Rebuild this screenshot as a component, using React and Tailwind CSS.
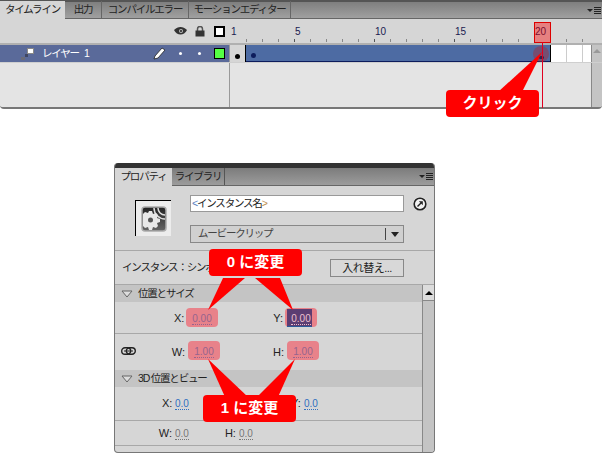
import React from "react";

const jp = "font-['Liberation_Sans','Noto_Sans_CJK_JP',sans-serif]";
const tight = "text-[10.5px] tracking-[-1.2px] whitespace-nowrap";

const Gear = () => (
  <svg width="26" height="26" viewBox="0 0 26 26">
    <defs>
      <linearGradient id="g" x1="0" y1="0" x2="0" y2="1">
        <stop offset="0" stopColor="#222" />
        <stop offset="1" stopColor="#666" />
      </linearGradient>
    </defs>
    <rect x="1" y="1" width="24" height="24" rx="3" fill="url(#g)" stroke="#aaa" strokeWidth="1.500" />
    <path d="M13 2a11 11 0 0 0 11 11M17 2a7 7 0 0 0 7 7" stroke="#ddd" strokeWidth="1.500" fill="none" />
    <path d="M8 5h3l1 3 3-1 2 2-1 3 3 1v3l-3 1 1 3-2 2-3-1-1 3H8l-1-3-3 1-2-2V8l2-2 3 1z" fill="#e8e8e8" />
    <circle cx="9.500" cy="14" r="2.500" fill="#555" />
  </svg>
);

const Eye = () => (
  <svg width="13" height="9" viewBox="0 0 13 9">
    <path d="M0 3c4-4 9-4 13 0-3 6-10 6-13 0z" fill="#333" />
    <circle cx="7" cy="4" r="2" fill="#bbb" />
    <circle cx="7" cy="4" r="1" fill="#222" />
  </svg>
);

const Lock = () => (
  <svg width="10" height="11" viewBox="0 0 10 11">
    <path d="M2.500 5V3a2.500 2.500 0 0 1 5 0v2" stroke="#555" strokeWidth="1.500" fill="none" />
    <rect x="0.500" y="4.500" width="9" height="6" fill="#333" />
  </svg>
);

const Pencil = () => (
  <svg width="13" height="13" viewBox="0 0 13 13">
    <path d="M1 12l1-3 7-8 3 2-7 8z" fill="#fff" stroke="#222" strokeWidth="0.800" />
  </svg>
);

const Link = () => (
  <svg width="15" height="8" viewBox="0 0 15 8">
    <rect x="0.700" y="0.700" width="9" height="6.600" rx="3.300" fill="none" stroke="#222" strokeWidth="1.400" />
    <rect x="5.300" y="0.700" width="9" height="6.600" rx="3.300" fill="none" stroke="#222" strokeWidth="1.400" />
    <path d="M3 4h9" stroke="#222" />
  </svg>
);

const Jump = () => (
  <svg width="14" height="14" viewBox="0 0 14 14">
    <circle cx="7" cy="7" r="5.800" fill="#f2f2f2" stroke="#222" strokeWidth="1.600" />
    <path d="M4.500 9.500L8 6" stroke="#222" strokeWidth="1.500" />
    <path d="M5.800 4.300h4v4z" fill="#222" />
  </svg>
);

const LayerIcon = () => (
  <svg width="14" height="14" viewBox="0 0 14 14">
    <rect x="0" y="10" width="4" height="3" fill="#6b6b78" />
    <rect x="4" y="7" width="3" height="3" fill="#3f4663" />
    <rect x="6.500" y="1.500" width="6" height="5" fill="#fff" stroke="#888" />
  </svg>
);

const Tri = () => (
  <svg width="12" height="8" viewBox="0 0 12 8">
    <path d="M1 1h10L6 7z" fill="#ddd" stroke="#666" />
  </svg>
);

const Menu = () => (
  <div className="flex items-center gap-[1px]">
    <div className="w-0 h-0 border-x-[3px] border-t-[3px] border-x-transparent border-t-[#222]" />
    <div className="flex flex-col gap-[1px]">
      <div className="w-[7px] h-[1px] bg-[#222]" />
      <div className="w-[7px] h-[1px] bg-[#222]" />
      <div className="w-[7px] h-[1px] bg-[#222]" />
      <div className="w-[7px] h-[1px] bg-[#222]" />
    </div>
  </div>
);

const Val = ({ children, color = "text-[#2f6fc0]", border = "border-[#2f6fc0]" }) => (
  <span className={`text-[10px] leading-[11px] border-b border-dotted ${color} ${border}`}>{children}</span>
);

const Pink = ({ children, dark }) => (
  <div className="relative w-[32px] h-[19px] rounded-[4px] bg-[#e8828a] flex items-center justify-center">
    {dark && <div className="absolute left-[2px] top-[1px] w-[25px] h-[18px] bg-[#5c3d72] border-b border-[#2a5a9a]" />}
    <span className={`relative mt-[2px] text-[10px] leading-[11px] border-b border-dotted ${dark ? "text-[#eec0d0] border-[#eec0d0]" : "text-[#96648e] border-[#96648e]"}`}>{children}</span>
  </div>
);

const Callout = ({ className, text, size = "text-[15px]" }) => (
  <div className={`absolute h-[27px] w-[93px] rounded-[4px] bg-[#ff0000] flex items-center justify-center font-bold text-white ${size} ${className}`}>
    {text}
  </div>
);

const frames = Array.from({ length: 23 }, (_, i) => i);

const Timeline = () => (
  <div className="relative h-[109px] w-[602px] bg-[#e4e4e4] border-b-2 border-[#777] rounded-b-[4px] flex flex-col text-[#222] overflow-hidden">
    {/* Tabs */}
    <div className={`h-[19px] flex items-end bg-gradient-to-b from-[#7f7f7f] to-[#a0a0a0] border-b border-[#666] border-t-2 border-t-[#555] ${tight}`}>
      <div className="h-[18px] w-[65px] bg-[#d6d6d6] leading-[17px] text-center -mb-px">タイムライン</div>
      <div className="h-[17px] w-[37px] border-r border-[#666] leading-[16px] text-center">出力</div>
      <div className="h-[17px] w-[87px] border-r border-[#666] leading-[16px] text-center">コンパイルエラー</div>
      <div className="h-[17px] w-[102px] border-r border-[#666] leading-[16px] text-center">モーションエディター</div>
      <div className="ml-auto mr-[1px] mb-[4px]"><Menu /></div>
    </div>
    {/* Ruler */}
    <div className="h-[26px] flex bg-[#d6d6d6] border-b-2 border-[#b0b0b0]">
      <div className="w-[230px] flex justify-end items-center pr-[5px]">
        <Eye />
        <div className="ml-[8px]"><Lock /></div>
        <div className="ml-[9px] w-[11px] h-[11px] border-2 border-black bg-white" />
      </div>
      <div className="flex-1 flex">
        {frames.map((i) => (
          <div key={i} className="relative w-[16px] shrink-0 h-full">
            <span className="absolute left-[1px] top-[7px] text-[10px] leading-[12px] text-[#1a1a50] whitespace-nowrap">
              {i === 0 ? "1" : (i + 1) % 5 === 0 ? i + 1 : ""}
            </span>
            {i > 0 && <div className={`absolute left-0 bottom-[1px] w-[1px] h-[3px] ${(i + 1) % 5 === 0 ? "bg-[#555]" : "bg-[#888]"}`} />}
          </div>
        ))}
      </div>
    </div>
    {/* Layer row */}
    <div className="h-[18px] flex border-b border-[#cfcfcf]">
      <div className="w-[229px] bg-[#5a6a9a] flex items-center text-white">
        <div className="ml-[21px]"><LayerIcon /></div>
        <span className={`ml-[7px] leading-[14px] mb-[2px] ${tight}`}>
          レイヤー<span className="ml-[5px]">1</span>
        </span>
        <div className="ml-auto flex items-center">
          <Pencil />
          <div className="ml-[13px] w-[3px] h-[3px] rounded-full bg-white" />
          <div className="ml-[16px] w-[3px] h-[3px] rounded-full bg-white" />
          <div className="ml-[13px] mr-[4px] w-[11px] h-[11px] bg-[#55ff44] border border-black" />
        </div>
      </div>
      <div className="w-[1px] bg-[#999]" />
      <div className="w-[16px] bg-[#d6d6d6] border-r border-black flex items-end justify-center pb-[3px]">
        <div className="w-[5px] h-[5px] rounded-full bg-black" />
      </div>
      <div className="w-[304px] bg-[#4d6ba3] border-b border-[#0d1c5c] flex items-end pb-[3px] pl-[5px]">
        <div className="w-[5px] h-[5px] rounded-full bg-[#0d1c5c]" />
      </div>
      <div className="w-[1px] bg-black" />
      <div className="flex-1 flex bg-white">
        <div className="w-[16px] border-r border-[#ccc]" />
        <div className="w-[16px] border-r border-[#ccc]" />
        <div className="w-[8px]" />
      </div>
      <div className="w-[11px] bg-[#c4c4c4] border-l border-[#888] flex justify-center pt-[4px]">
        <div className="w-0 h-0 border-x-[4px] border-b-[4px] border-x-transparent border-b-[#999]" />
      </div>
    </div>
    {/* Empty */}
    <div className="flex-1 flex">
      <div className="w-[229px] bg-[#e4e4e4]" />
      <div className="w-[1px] bg-[#999]" />
      <div className="flex-1" />
      <div className="w-[11px] bg-[#c4c4c4] border-l border-[#888]" />
    </div>
  </div>
);

const Divider = () => <div className="h-[1px] bg-[#a8a8a8]" />;

const SectionHead = ({ text }) => (
  <div className="h-[17px] bg-[#c4c4c4] flex items-center pl-[6px] gap-[5px] text-[#222]">
    <Tri />
    <span className={tight}>{text}</span>
  </div>
);

const Props = () => (
  <div className="ml-[114px] mt-[54px] w-[321px] h-[290px] flex flex-col bg-[#d6d6d6] border-x border-b border-[#777] rounded-[4px] overflow-hidden text-[#222]">
    <div className="h-[5px] bg-[#333]" />
    {/* Tabs */}
    <div className={`h-[18px] flex items-end bg-gradient-to-b from-[#7c7c7c] to-[#9c9c9c] border-b border-[#666] ${tight}`}>
      <div className="h-[18px] w-[57px] bg-[#d6d6d6] leading-[17px] text-center -mb-px">プロパティ</div>
      <div className="h-[17px] w-[53px] border-r border-[#555] leading-[16px] text-center">ライブラリ</div>
      <div className="ml-auto mr-[1px] mb-[5px]"><Menu /></div>
    </div>
    {/* Name block */}
    <div className="h-[65px] flex border-b border-[#a8a8a8]">
      <div className="ml-[20px] mt-[14px] w-[36px] h-[36px] border-l border-t border-black bg-[#ececec] flex items-center justify-center">
        <Gear />
      </div>
      <div className="ml-[19px] mt-[9px] flex flex-col gap-[13px] w-[214px]">
        <div className={`h-[17px] bg-white border border-[#999] leading-[15px] pl-[1px] ${tight}`}>
          <span className="text-[#5a7fc0]">&lt;</span>インスタンス名<span className="text-[#c09050]">&gt;</span>
        </div>
        <div className={`h-[18px] bg-[#d0d0d0] border border-[#888] flex items-center text-[#444] pl-[7px] ${tight}`}>
          ムービークリップ
          <div className="ml-auto w-[18px] h-[12px] border-l border-[#444] flex items-center justify-center">
            <div className="w-0 h-0 border-x-[4px] border-t-[5px] border-x-transparent border-t-[#222]" />
          </div>
        </div>
      </div>
      <div className="ml-[9px] mt-[11px]"><Jump /></div>
    </div>
    {/* Instance */}
    <div className="h-[34px] flex items-center border-b border-[#a8a8a8] pl-[7px]">
      <span className={tight}>インスタンス：シンボル 1</span>
      <div className="ml-auto mr-[30px] w-[74px] h-[18px] bg-[#d8d8d8] border border-[#888] text-center text-[11px] tracking-[-0.5px] leading-[16px] whitespace-nowrap">入れ替え...</div>
    </div>
    {/* Scrolling content */}
    <div className="flex-1 flex min-h-0">
      <div className="flex-1 flex flex-col min-w-0 text-[11px]">
        <SectionHead text="位置とサイズ" />
        <div className="h-[31px] flex items-center pl-[59px]">
          <span className="w-[10px] text-right mt-[2px]">X:</span>
          <div className="ml-[2px]"><Pink>0.00</Pink></div>
          <span className="ml-[55px] w-[10px] text-right mt-[2px]">Y:</span>
          <div className="ml-[2px]"><Pink dark>0.00</Pink></div>
        </div>
        <Divider />
        <div className="h-[36px] flex items-start pt-[7px] pl-[6px]">
          <div className="mt-[6px]"><Link /></div>
          <span className="ml-[35px] w-[14px] text-right mt-[3px]">W:</span>
          <div className="ml-[3px]"><Pink>1.00</Pink></div>
          <span className="ml-[50px] w-[14px] text-right mt-[3px]">H:</span>
          <div className="ml-[3px]"><Pink>1.00</Pink></div>
        </div>
        <SectionHead text="3D 位置とビュー" />
        <div className="h-[33px] flex items-center pl-[47px]">
          <span className="w-[10px] text-right">X:</span>
          <div className="ml-[3px]"><Val>0.0</Val></div>
          <span className="ml-[102px] w-[10px] text-right">Y:</span>
          <div className="ml-[3px]"><Val>0.0</Val></div>
        </div>
        <Divider />
        <div className="h-[24px] flex items-center pl-[43px]">
          <span className="w-[14px] text-right">W:</span>
          <div className="ml-[3px]"><Val color="text-[#777]" border="border-[#777]">0.0</Val></div>
          <span className="ml-[33px] w-[14px] text-right">H:</span>
          <div className="ml-[3px]"><Val color="text-[#777]" border="border-[#777]">0.0</Val></div>
        </div>
        <Divider />
      </div>
      <div className="w-[12px] flex flex-col border-l border-[#888] bg-[#c4c4c4]">
        <div className="h-[16px] bg-[#dcdcdc] border-b border-[#888] flex items-center justify-center">
          <div className="w-0 h-0 border-x-[4px] border-b-[4px] border-x-transparent border-b-black" />
        </div>
      </div>
    </div>
  </div>
);

export default function App() {
  return (
    <div className={`relative w-[602px] h-[453px] bg-white overflow-hidden ${jp}`}>
      <Timeline />
      <Props />

      {/* Annotation overlays */}
      <div className="absolute left-[534px] top-[22px] w-[17px] h-[21px] bg-[#ff000066] border border-[#dd0000]" />
      <div className="absolute left-[533px] top-[46px] w-[16px] h-[16px] rounded-full bg-[#a0304080]" />
      <div className="absolute left-[539px] top-[56px] w-[5px] h-[3px] rounded-full bg-[#33204a]" />
      <div className="absolute left-[542px] top-[42px] w-[1px] h-[66px] bg-[#e00020]" />
      <svg className="absolute left-0 top-0 pointer-events-none" width="602" height="453">
        <path d="M498 92L542 52L522 92z" fill="#f00" />
        <path d="M223 278L208 310L245 278z" fill="#f00" />
        <path d="M255 278L293 310L280 278z" fill="#f00" />
        <path d="M225 397L208 359L248 397z" fill="#f00" />
        <path d="M257 397L295 359L278 397z" fill="#f00" />
      </svg>
      <Callout className="left-[446px] top-[90px]" text="クリック" />
      <Callout className="left-[209px] top-[249px]" text="0 に変更" />
      <Callout className="left-[203px] top-[395px]" text="1 に変更" />
    </div>
  );
}
